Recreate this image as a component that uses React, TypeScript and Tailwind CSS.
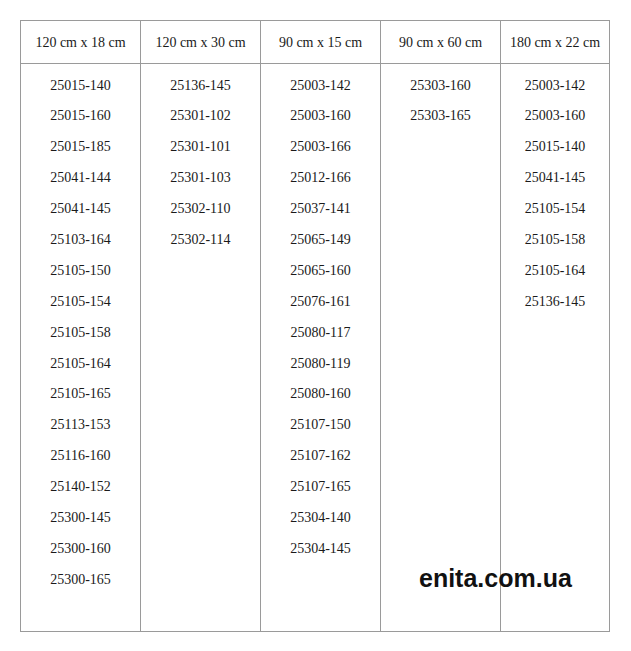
import React from 'react';

const columns: { title: string; codes: string[] }[] = [
  {
    title: '120 cm x 18 cm',
    codes: [
      '25015-140', '25015-160', '25015-185', '25041-144', '25041-145', '25103-164',
      '25105-150', '25105-154', '25105-158', '25105-164', '25105-165', '25113-153',
      '25116-160', '25140-152', '25300-145', '25300-160', '25300-165',
    ],
  },
  {
    title: '120 cm x 30 cm',
    codes: ['25136-145', '25301-102', '25301-101', '25301-103', '25302-110', '25302-114'],
  },
  {
    title: '90 cm x 15 cm',
    codes: [
      '25003-142', '25003-160', '25003-166', '25012-166', '25037-141', '25065-149',
      '25065-160', '25076-161', '25080-117', '25080-119', '25080-160', '25107-150',
      '25107-162', '25107-165', '25304-140', '25304-145',
    ],
  },
  {
    title: '90 cm x 60 cm',
    codes: ['25303-160', '25303-165'],
  },
  {
    title: '180 cm x 22 cm',
    codes: [
      '25003-142', '25003-160', '25015-140', '25041-145', '25105-154', '25105-158',
      '25105-164', '25136-145',
    ],
  },
];

export default function App() {
  return (
    <div className="relative w-[631px] h-[651px] bg-white pt-[20px] pl-[20px]">
      <div
        className="flex w-[590px] h-[612px] border border-[#9a9a9a] text-[14px] text-[#1a1a1a]"
        style={{ fontFamily: '"Liberation Serif", "Times New Roman", serif' }}
      >
        {columns.map((col, i) => (
          <div
            key={col.title}
            className={
              i < columns.length - 1
                ? 'flex flex-col w-[120px] border-r border-[#9a9a9a]'
                : 'flex flex-col flex-1'
            }
          >
            <div className="h-[43px] shrink-0 flex items-center justify-center border-b border-[#9a9a9a] whitespace-nowrap">
              {col.title}
            </div>
            <div className="pt-[6.5px] flex flex-col">
              {col.codes.map((code, j) => (
                <div key={j} className="h-[30.9px] leading-[30.9px] text-center">
                  {code}
                </div>
              ))}
            </div>
          </div>
        ))}
      </div>

      {/* watermark over the table */}
      <div
        className="absolute left-[419px] top-[566px] text-[25px] leading-none font-bold text-[#111]"
        style={{ fontFamily: '"Liberation Sans", Arial, sans-serif' }}
      >
        enita.com.ua
      </div>
    </div>
  );
}
